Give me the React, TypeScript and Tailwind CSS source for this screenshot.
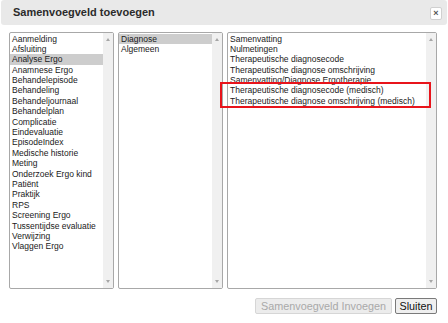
const categorieen = [
  "Aanmelding",
  "Afsluiting",
  "Analyse Ergo",
  "Anamnese Ergo",
  "Behandelepisode",
  "Behandeling",
  "Behandeljournaal",
  "Behandelplan",
  "Complicatie",
  "Eindevaluatie",
  "EpisodeIndex",
  "Medische historie",
  "Meting",
  "Onderzoek Ergo kind",
  "Patiënt",
  "Praktijk",
  "RPS",
  "Screening Ergo",
  "Tussentijdse evaluatie",
  "Verwijzing",
  "Vlaggen Ergo",
];

const groepen = ["Diagnose", "Algemeen"];

const velden = [
  "Samenvatting",
  "Nulmetingen",
  "Therapeutische diagnosecode",
  "Therapeutische diagnose omschrijving",
  "Samenvatting/Diagnose Ergotherapie",
  "Therapeutische diagnosecode (medisch)",
  "Therapeutische diagnose omschrijving (medisch)",
];

interface ListBoxProps {
  items: string[];
  selected?: string;
  width: string;
}

const ListBox = ({ items, selected, width }: ListBoxProps) => {
  return (
    <div className={`${width} h-[257px] flex border border-[#a8a8a8] rounded-[2px] bg-white`}>
      {/* Items */}
      <div className="flex-1 pt-[0.5px] overflow-hidden">
        {items.map((item) => (
          <div
            key={item}
            className={`h-[10.4px] leading-[10.4px] pl-[2px] text-[8.5px] text-[#1a1a1a] whitespace-nowrap ${
              item === selected ? "bg-[#cdcdcd]" : ""
            }`}
          >
            {item}
          </div>
        ))}
      </div>

      {/* Scrollbar */}
      <div className="w-[10px] bg-[#f0f0f0] flex flex-col items-center justify-between py-[5px]">
        <div className="w-0 h-0 border-l-[2.5px] border-r-[2.5px] border-b-[3px] border-l-transparent border-r-transparent border-b-[#a6a6a6]" />
        <div className="w-0 h-0 border-l-[2.5px] border-r-[2.5px] border-t-[3px] border-l-transparent border-r-transparent border-t-[#a6a6a6]" />
      </div>
    </div>
  );
};

export default function App() {
  return (
    <div className="relative w-[448px] h-[323px] bg-white overflow-hidden font-['Liberation_Sans',Arial,sans-serif]">
      {/* Titelbalk */}
      <div className="mx-[1px] h-[25px] rounded-[3px] bg-[#e9e9e9] flex items-center justify-between pl-[12px] pr-[5px]">
        <h2 className="text-[11px] font-bold text-[#2b2b2b]">Samenvoegveld toevoegen</h2>
        <button className="w-[12px] h-[13px] mt-[2px] bg-white border border-[#d0d0d0] rounded-[2px] flex items-center justify-center text-[9px] font-bold leading-none text-[#555]">
          ×
        </button>
      </div>

      {/* Lijsten */}
      <div className="flex pl-[9px] mt-[7px]">
        <ListBox items={categorieen} selected="Analyse Ergo" width="w-[105px]" />
        <div className="ml-[4px]">
          <ListBox items={groepen} selected="Diagnose" width="w-[105px]" />
        </div>
        <div className="ml-[4px]">
          <ListBox items={velden} width="w-[210px]" />
        </div>
      </div>

      {/* Knoppen */}
      <div className="flex justify-end gap-[3px] pr-[11px] mt-[9px]">
        <button
          disabled
          className="w-[137px] h-[16px] text-[10.8px] leading-none text-[#a9a9a9] bg-[#ececec] border border-[#d6d6d6] rounded-[2px]"
        >
          Samenvoegveld Invoegen
        </button>
        <button className="w-[42px] h-[16px] text-[10.8px] leading-none text-[#111] bg-[#efefef] border border-[#7a7a7a] rounded-[2px]">
          Sluiten
        </button>
      </div>

      {/* Markering */}
      <div className="absolute left-[220px] top-[82px] w-[211px] h-[26px] border-2 border-[#e8141b]" />
    </div>
  );
}
